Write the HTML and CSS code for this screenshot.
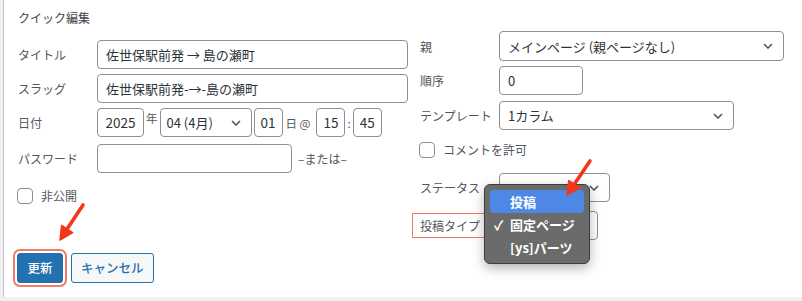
FILE: index.html
```html
<!DOCTYPE html>
<html lang="ja">
<head>
    <meta charset="UTF-8">
    <title>クイック編集</title>
    <link rel="stylesheet" href="styles.css">
</head>
<body>
<div class="screen">
    <div class="quick-edit">
        <div class="columns">
            <div class="col-left">
                <div class="legend">クイック編集</div>

                <div class="row">
                    <span class="label">タイトル</span>
                    <div class="input wide">佐世保駅前発 → 島の瀬町</div>
                </div>
                <div class="row">
                    <span class="label">スラッグ</span>
                    <div class="input wide">佐世保駅前発-→-島の瀬町</div>
                </div>
                <div class="row">
                    <span class="label">日付</span>
                    <div class="date">
                        <div class="input num w-year">2025</div>
                        <span class="unit up">年</span>
                        <div class="select w-month"><span>04 (4月)</span>
                            <svg class="chev" width="10" height="6" viewBox="0 0 10 6"><path d="M1 1l4 4 4-4" fill="none" stroke="#50575e" stroke-width="1.6"/></svg>
                        </div>
                        <div class="input num w-day">01</div>
                        <span class="unit at">日 @</span>
                        <div class="input num w-time">15</div>
                        <span class="unit colon">:</span>
                        <div class="input num w-time">45</div>
                    </div>
                </div>
                <div class="row row-pass">
                    <span class="label">パスワード</span>
                    <div class="input w-pass"></div>
                    <span class="or">–または–</span>
                </div>
                <label class="check check-private">
                    <span class="box"></span>非公開
                </label>
            </div>

            <div class="col-right">
                <div class="row r-parent">
                    <span class="label">親</span>
                    <div class="select w-parent"><span>メインページ (親ページなし)</span>
                        <svg class="chev" width="10" height="6" viewBox="0 0 10 6"><path d="M1 1l4 4 4-4" fill="none" stroke="#50575e" stroke-width="1.6"/></svg>
                    </div>
                </div>
                <div class="row r-order">
                    <span class="label">順序</span>
                    <div class="input w-order">0</div>
                </div>
                <div class="row r-template">
                    <span class="label">テンプレート</span>
                    <div class="select w-template"><span>1カラム</span>
                        <svg class="chev" width="10" height="6" viewBox="0 0 10 6"><path d="M1 1l4 4 4-4" fill="none" stroke="#50575e" stroke-width="1.6"/></svg>
                    </div>
                </div>
                <label class="check check-comment">
                    <span class="box"></span>コメントを許可
                </label>
                <div class="row r-status">
                    <span class="label">ステータス</span>
                    <div class="select w-status"><span></span>
                        <svg class="chev" width="10" height="6" viewBox="0 0 10 6"><path d="M1 1l4 4 4-4" fill="none" stroke="#50575e" stroke-width="1.6"/></svg>
                    </div>
                </div>
                <div class="row r-type">
                    <span class="label"><span class="marked">投稿タイプ</span></span>
                    <div class="select w-type"><span></span></div>
                </div>
            </div>
        </div>

        <div class="actions">
            <button class="btn btn-primary marked-btn">更新</button>
            <button class="btn btn-secondary">キャンセル</button>
        </div>
    </div>

    <!-- 投稿タイプのドロップダウン (開いた状態) -->
    <div class="popup">
        <div class="popup-item active">投稿</div>
        <div class="popup-item checked">固定ページ</div>
        <div class="popup-item">[ys]パーツ</div>
    </div>

    <svg class="arrows" width="802" height="301" viewBox="0 0 802 301">
        <path d="M83 205 L67.1 229.1" stroke="#f2371c" stroke-width="3.6" stroke-linecap="round"/>
        <path d="M60 240 L72.6 232.7 L61.6 225.5 Z" fill="#f2371c" stroke="#f2371c" stroke-width="1.5" stroke-linejoin="round"/>
        <path d="M590 161 L574.3 184.2" stroke="#f2371c" stroke-width="3.6" stroke-linecap="round"/>
        <path d="M567 195 L579.8 187.9 L568.8 180.5 Z" fill="#f2371c" stroke="#f2371c" stroke-width="1.5" stroke-linejoin="round"/>
    </svg>
</div>
</body>
</html>
```

FILE: styles.css
```css
body {
    margin: 0;
    background: #f0f0f1;
    font-family: "Noto Sans CJK JP", "Noto Sans", sans-serif;
    color: #3c434a;
    font-size: 12px;
}

.screen {
    position: relative;
    width: 802px;
    height: 301px;
    overflow: hidden;
}

.quick-edit {
    box-sizing: border-box;
    height: 297px;
    margin-left: 3px;
    border-left: 1px solid #c3c4c7;
    background: #fff;
    padding: 0 0 14px 13px;
    display: flex;
    flex-direction: column;
}

.columns {
    display: flex;
    gap: 11px;
}

.col-left {
    width: 391px;
}

.col-right {
    width: 365px;
    padding-top: 31px;
}

.legend {
    margin: 9px 0 13px 1px;
    line-height: 18px;
    color: #3c434a;
}

.row {
    display: flex;
    align-items: center;
    height: 29px;
    margin-bottom: 5px;
}

.label {
    width: 79px;
    flex: none;
    padding-left: 1px;
    color: #50575e;
    white-space: nowrap;
}

.input,
.select {
    box-sizing: border-box;
    height: 29px;
    border: 1px solid #8c8f94;
    border-radius: 4px;
    background: #fff;
    color: #2c3338;
    font-size: 13px;
    line-height: 27px;
    padding: 0 8px;
    white-space: nowrap;
}

.input.wide {
    width: 312px;
}

.date {
    display: flex;
    align-items: center;
}

.input.num {
    padding: 0 4px;
    text-align: center;
    font-size: 13.5px;
}

.w-year { width: 47px; }
.w-day { width: 29px; }
.w-time { width: 29px; }
.w-pass { width: 195px; }
.w-order { width: 84px; }

.unit {
    font-size: 11.5px;
    color: #50575e;
    white-space: nowrap;
}

.unit.up {
    align-self: flex-start;
    margin: 2px 2px 0 2px;
}

.unit.at {
    margin: 0 6px 0 3px;
}

.unit.colon {
    margin: 0 2px;
}

.select {
    display: flex;
    align-items: center;
    justify-content: space-between;
    padding: 0 10px 0 8px;
}

.chev {
    flex: none;
}

.w-month { width: 92px; margin-right: 2px; padding-left: 6px; }
.w-parent { width: 285px; height: 30px; padding-right: 10px; }
.w-template { width: 235px; }
.w-status { width: 111px; }
.w-type { width: 99px; }

.row-pass {
    margin-top: 7px;
}

.or {
    margin-left: 6px;
    color: #50575e;
}

.check {
    display: flex;
    align-items: center;
    color: #50575e;
}

.check .box {
    box-sizing: border-box;
    width: 16px;
    height: 16px;
    border: 1px solid #8c8f94;
    border-radius: 4px;
    margin-right: 8px;
}

.check-private {
    margin-top: 14px;
}

.r-parent { height: 30px; margin-bottom: 4px; }
.r-order { height: 30px; margin-bottom: 6px; }

.check-comment {
    margin-top: 11px;
    margin-bottom: 15px;
}

.r-status { margin-bottom: 9px; }

.marked {
    outline: 1.5px solid #f47a66;
    padding: 3px 4px 3px 7px;
    margin-left: -7px;
}

.actions {
    margin-top: auto;
    display: flex;
    gap: 8px;
}

.btn {
    box-sizing: border-box;
    height: 30px;
    border-radius: 3px;
    font-family: inherit;
    font-size: 12.5px;
    font-weight: 500;
    padding: 0 9px;
    line-height: 28px;
    white-space: nowrap;
    cursor: pointer;
}

.btn-primary {
    min-width: 46px;
    background: #2271b1;
    border: 1px solid #2271b1;
    color: #fff;
}

.marked-btn {
    outline: 2px solid #f47a66;
    outline-offset: 2px;
}

.btn-secondary {
    min-width: 82px;
    background: #f6f7f7;
    border: 1px solid #2271b1;
    color: #2271b1;
}

.popup {
    position: absolute;
    left: 484px;
    top: 184px;
    box-sizing: border-box;
    width: 106px;
    height: 80px;
    padding: 5px;
    background: #6b6b6b;
    border: 1px solid #3d3d3d;
    border-radius: 6px;
    box-shadow: 0 4px 12px rgba(0, 0, 0, 0.3);
}

.popup-item {
    position: relative;
    height: 23px;
    line-height: 23px;
    padding-left: 20px;
    color: #fff;
    font-size: 13px;
    font-weight: 600;
    border-radius: 4px;
}

.popup-item.active {
    background: #4d88e6;
}

.popup-item.checked::before {
    content: "✓";
    position: absolute;
    left: 4px;
}

.arrows {
    position: absolute;
    left: 0;
    top: 0;
    pointer-events: none;
}
```
